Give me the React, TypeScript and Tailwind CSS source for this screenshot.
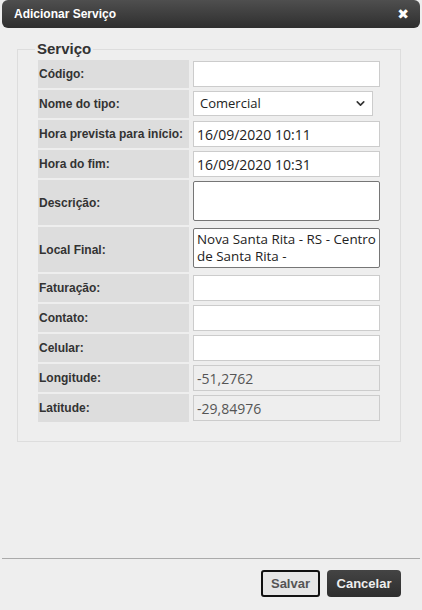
import { ChevronDown } from 'lucide-react';

const label = "font-['Liberation_Sans',Arial,sans-serif] font-bold text-[12px] text-[#333]";
const field = "font-['Open_Sans',sans-serif] text-[14px] text-[#222]";

function Row({ name, tall, children }: { name: string; tall?: boolean; children: React.ReactNode }) {
  return (
    <div className={`flex gap-[4px] ${tall ? 'h-[45px]' : 'h-[28px]'}`}>
      <div className={`w-[151px] bg-[#dddddd] flex items-center pl-[1px] ${label}`}>{name}</div>
      <div className="flex-1 pt-[1px]">{children}</div>
    </div>
  );
}

function TextInput({ value = '', disabled }: { value?: string; disabled?: boolean }) {
  return (
    <div
      className={`h-[26px] w-[187px] border border-[#cccccc] flex items-center px-[3px] ${field} ${
        disabled ? 'bg-[#eeeeee] text-[#555]' : 'bg-white'
      }`}
    >
      {value}
    </div>
  );
}

function TextArea({ value = '' }: { value?: string }) {
  return (
    <div className="h-[40px] w-[187px] border border-[#767676] rounded-[2px] bg-white pl-[3px] pr-[1px] pt-[2px] leading-[17px] font-['Open_Sans',sans-serif] text-[13.4px] text-[#222]">
      {value}
    </div>
  );
}

export default function App() {
  return (
    <div className="w-[422px] h-[610px] bg-[#eeeeee] flex flex-col overflow-hidden">
      <div className="mx-[2px] h-[28px] rounded-[6px] bg-gradient-to-b from-[#4f4f4f] to-[#2f2f2f] flex items-center justify-between pl-[12px] pr-[11px]">
        <span className="font-['Liberation_Sans',Arial,sans-serif] font-bold text-[12px] text-white">Adicionar Serviço</span>
        <span className="font-['DejaVu_Sans',sans-serif] font-bold text-[14px] text-white leading-none">✖</span>
      </div>

      <div className="flex-1 px-[17px] pt-[11px]">
        <fieldset className="w-[382px] border border-[#dddddd] px-[20px] pt-[1px] pb-[19px]">
          <legend className="-ml-[3px] px-[2px] font-['Liberation_Sans',Arial,sans-serif] font-bold text-[15px] text-[#333] leading-[20px]">
            Serviço
          </legend>
          <div className="flex flex-col gap-[2px]">
            <Row name="Código:"><TextInput /></Row>
            <Row name="Nome do tipo:">
              <div className="h-[25px] w-[180px] border border-[#cccccc] bg-white flex items-center justify-between pl-[6px] pr-[5px] font-['Open_Sans',sans-serif] text-[13px] text-[#222]">
                Comercial
                <ChevronDown className="w-[13px] h-[13px] text-[#333]" strokeWidth={3} />
              </div>
            </Row>
            <Row name="Hora prevista para início:"><TextInput value="16/09/2020 10:11" /></Row>
            <Row name="Hora do fim:"><TextInput value="16/09/2020 10:31" /></Row>
            <Row name="Descrição:" tall><TextArea /></Row>
            <Row name="Local Final:" tall><TextArea value="Nova Santa Rita - RS - Centro de Santa Rita -" /></Row>
            <Row name="Faturação:"><TextInput /></Row>
            <Row name="Contato:"><TextInput /></Row>
            <Row name="Celular:"><TextInput /></Row>
            <Row name="Longitude:"><TextInput value="-51,2762" disabled /></Row>
            <Row name="Latitude:"><TextInput value="-29,84976" disabled /></Row>
          </div>
        </fieldset>
      </div>

      <div className="mx-[2px] border-t border-[#aaaaaa] h-[52px] flex items-start justify-end gap-[7px] pt-[11px] pr-[19px]">
        <button className="w-[59px] h-[27px] rounded-[3px] border-2 border-[#111] bg-[#e6e6e6] font-['Liberation_Sans',Arial,sans-serif] font-bold text-[13px] text-[#555]">
          Salvar
        </button>
        <button className="w-[74px] h-[27px] rounded-[4px] bg-gradient-to-b from-[#444] to-[#2e2e2e] font-['Liberation_Sans',Arial,sans-serif] font-bold text-[13px] text-[#eee]">
          Cancelar
        </button>
      </div>
    </div>
  );
}
